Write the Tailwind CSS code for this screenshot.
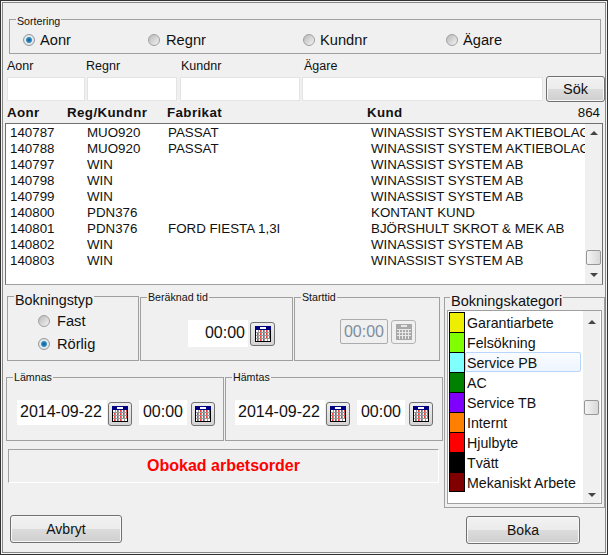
<!DOCTYPE html>
<html lang="sv">
<head>
<meta charset="utf-8">
<title>Bokning</title>
<script src="https://cdn.jsdelivr.net/npm/@tailwindcss/browser@4"></script>
</head>
<body class="m-0 bg-[#f0f0f0]">
<svg width="0" height="0" class="absolute">
  <symbol id="cal" viewBox="0 0 16 16">
    <rect x="0.5" y="0.5" width="15" height="15" fill="#fff" stroke="#000"/>
    <rect x="0" y="0" width="16" height="4" fill="#000080"/>
    <rect x="5" y="1" width="6" height="2" fill="#fff"/>
    <path d="M1 6.5h14M1 9.5h14M1 12.5h14M3.5 4v11M6.5 4v11M9.5 4v11M12.5 4v11" stroke="#999" stroke-width="1"/>
    <path d="M5 5h1M8 5h1M11 5h1M14 5h1M2 8h1M5 8h1M8 8h1M11 8h1M14 8h1M2 11h1M5 11h1M8 11h1M11 11h1M14 11h1M2 14h1M5 14h1M8 14h1" stroke="#e00000" stroke-width="1.4"/>
  </symbol>
  <symbol id="cald" viewBox="0 0 16 16">
    <rect x="0" y="0" width="16" height="16" fill="#a8a8a8"/>
    <rect x="5" y="1" width="6" height="2" fill="#e8e8e8"/>
    <path d="M1 5.5h14M1 8.5h14M1 11.5h14M3.5 5v10M6.5 5v10M9.5 5v10M12.5 5v10" stroke="#e8e8e8" stroke-width="1"/>
  </symbol>
</svg>
<div class="relative w-[608px] h-[555px] overflow-hidden bg-[#f0f0f0] text-[#111] font-['Liberation_Sans',Arial,sans-serif] shadow-[inset_0_0_0_1px_#333,inset_0_0_0_2px_#f4f4f4,inset_0_0_0_3px_#888]">

  <fieldset class="ml-[9px] pt-0 mt-[12px] w-[592px] h-[42px] border border-[#a0a0a0]">
    <legend class="ml-[6px] px-px pt-[4px] text-[10.67px] leading-[10px]">Sortering</legend>
    <div class="flex mt-[6px] pl-[13px] text-[14.67px] leading-[16px]">
      <label class="flex items-center w-[125px]"><span class="w-[12px] h-[12px] rounded-full border border-[#8f9aa3] bg-[radial-gradient(circle,#0b5f96_0,#2f8cc2_35%,#e8e8e8_50%,#dcdcdc_100%)] mr-[5px]"></span>Aonr</label>
      <label class="flex items-center w-[155px]"><span class="w-[12px] h-[12px] rounded-full border border-[#a0a0a0] bg-[linear-gradient(135deg,#b8b8b8,#f4f4f4)] mr-[6px]"></span>Regnr</label>
      <label class="flex items-center w-[143px]"><span class="w-[12px] h-[12px] rounded-full border border-[#a0a0a0] bg-[linear-gradient(135deg,#b8b8b8,#f4f4f4)] mr-[5px]"></span>Kundnr</label>
      <label class="flex items-center"><span class="w-[12px] h-[12px] rounded-full border border-[#a0a0a0] bg-[linear-gradient(135deg,#b8b8b8,#f4f4f4)] mr-[5px]"></span>Ägare</label>
    </div>
  </fieldset>

  <div class="flex pl-[7px] mt-[5px] text-[12.5px] leading-[14px]">
    <span class="w-[79px]">Aonr</span><span class="w-[95px]">Regnr</span><span class="w-[123px]">Kundnr</span><span>Ägare</span>
  </div>

  <div class="flex items-start pl-[7px] mt-[3px] h-[26px]">
    <div class="w-[78px] h-[24px] mt-px bg-white border border-[#e4e4e4]"></div>
    <div class="w-[90px] h-[24px] mt-px ml-[2px] bg-white border border-[#e4e4e4]"></div>
    <div class="w-[120px] h-[24px] mt-px ml-[3px] bg-white border border-[#e4e4e4]"></div>
    <div class="w-[241px] h-[24px] mt-px ml-[2px] bg-white border border-[#e4e4e4]"></div>
    <button class="w-[59px] h-[26px] ml-[3px] rounded-[3px] border border-[#707070] bg-[linear-gradient(#f2f2f2_0,#ebebeb_50%,#dcdcdc_50%,#cfcfcf_100%)] text-[14.5px] leading-[22px] shadow-[inset_0_0_0_1px_#f8f8f8]">Sök</button>
  </div>

  <div class="flex pl-[7px] pr-[8px] mt-[3px] h-[18px] text-[13.33px] leading-[16px]">
    <b class="w-[60px] tracking-[0.4px]">Aonr</b><b class="w-[100px] tracking-[0.4px]">Reg/Kundnr</b><b class="w-[200px] tracking-[0.4px]">Fabrikat</b><b class="flex-1 tracking-[0.4px]">Kund</b><span>864</span>
  </div>

  <div class="flex ml-[5px] w-[598px] h-[162px] border border-[#707070] border-b-[#a0a0a0] bg-white text-[13.33px] leading-[16px]">
    <div class="w-[579px] overflow-hidden whitespace-nowrap pl-[4px] pt-px">
      <div class="grid grid-cols-[77px_81px_203px_max-content]"><span>140787</span><span>MUO920</span><span>PASSAT</span><span>WINASSIST SYSTEM AKTIEBOLAGET</span></div>
      <div class="grid grid-cols-[77px_81px_203px_max-content]"><span>140788</span><span>MUO920</span><span>PASSAT</span><span>WINASSIST SYSTEM AKTIEBOLAGET</span></div>
      <div class="grid grid-cols-[77px_81px_203px_max-content]"><span>140797</span><span>WIN</span><span></span><span>WINASSIST SYSTEM AB</span></div>
      <div class="grid grid-cols-[77px_81px_203px_max-content]"><span>140798</span><span>WIN</span><span></span><span>WINASSIST SYSTEM AB</span></div>
      <div class="grid grid-cols-[77px_81px_203px_max-content]"><span>140799</span><span>WIN</span><span></span><span>WINASSIST SYSTEM AB</span></div>
      <div class="grid grid-cols-[77px_81px_203px_max-content]"><span>140800</span><span>PDN376</span><span></span><span>KONTANT KUND</span></div>
      <div class="grid grid-cols-[77px_81px_203px_max-content]"><span>140801</span><span>PDN376</span><span>FORD FIESTA 1,3I</span><span>BJÖRSHULT SKROT &amp; MEK AB</span></div>
      <div class="grid grid-cols-[77px_81px_203px_max-content]"><span>140802</span><span>WIN</span><span></span><span>WINASSIST SYSTEM AB</span></div>
      <div class="grid grid-cols-[77px_81px_203px_max-content]"><span>140803</span><span>WIN</span><span></span><span>WINASSIST SYSTEM AB</span></div>
    </div>
    <div class="flex flex-col items-center w-[17px] bg-[#f0f0f0]">
      <span class="mt-[7px] w-0 h-0 border-x-[4px] border-x-transparent border-b-[4px] border-b-[#444]"></span>
      <span class="mt-[115px] w-[15px] h-[15px] rounded-[2px] border border-[#979797] bg-[linear-gradient(90deg,#f4f4f4,#d8d8d8)]"></span>
      <span class="mt-[8px] w-0 h-0 border-x-[4px] border-x-transparent border-t-[4px] border-t-[#444]"></span>
    </div>
  </div>

  <div class="absolute left-0 top-[285px] w-full flex">
    <div class="w-[444px] shrink-0">
      <div class="flex pl-[7px] items-start">
        <fieldset class="w-[132px] h-[76px] border border-[#a0a0a0]">
          <legend class="ml-[6px] px-px pt-[8px] text-[14.3px] leading-[14px]">Bokningstyp</legend>
          <div class="mt-[6px] pl-[30px] flex flex-col gap-[7px] text-[14.67px] leading-[16px]">
            <label class="flex items-center"><span class="w-[12px] h-[12px] rounded-full border border-[#a0a0a0] bg-[linear-gradient(135deg,#b8b8b8,#f4f4f4)] mr-[7px]"></span>Fast</label>
            <label class="flex items-center"><span class="w-[12px] h-[12px] rounded-full border border-[#8f9aa3] bg-[radial-gradient(circle,#0b5f96_0,#2f8cc2_35%,#e8e8e8_50%,#dcdcdc_100%)] mr-[7px]"></span>Rörlig</label>
          </div>
        </fieldset>
        <fieldset class="mt-[5px] ml-[1px] w-[153px] h-[71px] border border-[#a0a0a0]">
          <legend class="ml-[6px] px-px text-[10.67px] leading-[14px]">Beräknad tid</legend>
          <div class="flex items-start mt-[16px] ml-[47px]">
            <div class="w-[60px] h-[27px] bg-white text-right pr-[3px] text-[16px] leading-[25px]">00:00</div>
            <button class="flex items-center justify-center ml-[2px] mt-[2px] w-[25px] h-[24px] rounded-[3px] border border-[#707070] bg-[linear-gradient(#eeeeee,#d4d4d4)]"><svg class="w-[16px] h-[16px]"><use href="#cal"/></svg></button>
          </div>
        </fieldset>
        <fieldset class="mt-[5px] ml-[1px] w-[146px] h-[71px] border border-[#a0a0a0]">
          <legend class="ml-[6px] px-px text-[10.67px] leading-[14px]">Starttid</legend>
          <div class="flex items-start mt-[15px] ml-[45px]">
            <div class="w-[48px] h-[25px] bg-[#f0f0f0] border border-[#acacac] rounded-[2px] text-center text-[#7f8c9c] text-[16px] leading-[23px]">00:00</div>
            <button class="flex items-center justify-center ml-[3px] mt-px w-[25px] h-[24px] rounded-[3px] border border-[#b4b4b4] bg-[#f0f0f0]"><svg class="w-[16px] h-[16px]"><use href="#cald"/></svg></button>
          </div>
        </fieldset>
      </div>

      <div class="flex pl-[6px] mt-[9px] items-start">
        <fieldset class="w-[218px] h-[71px] border border-[#a0a0a0]">
          <legend class="ml-[6px] px-px text-[10.67px] leading-[14px]">Lämnas</legend>
          <div class="flex items-start mt-[16px] ml-[10px]">
            <div class="w-[90px] h-[25px] bg-white text-[16px] leading-[24px] pl-[3px]">2014-09-22</div>
            <button class="flex items-center justify-center ml-px mt-[2px] w-[24px] h-[24px] rounded-[3px] border border-[#707070] bg-[linear-gradient(#eeeeee,#d4d4d4)]"><svg class="w-[16px] h-[16px]"><use href="#cal"/></svg></button>
            <div class="w-[48px] h-[25px] ml-[7px] bg-white text-center text-[16px] leading-[24px]">00:00</div>
            <button class="flex items-center justify-center ml-[4px] mt-[2px] w-[24px] h-[24px] rounded-[3px] border border-[#707070] bg-[linear-gradient(#eeeeee,#d4d4d4)]"><svg class="w-[16px] h-[16px]"><use href="#cal"/></svg></button>
          </div>
        </fieldset>
        <fieldset class="ml-px w-[218px] h-[71px] border border-[#a0a0a0]">
          <legend class="ml-[6px] px-px text-[10.67px] leading-[14px]">Hämtas</legend>
          <div class="flex items-start mt-[16px] ml-[9px]">
            <div class="w-[90px] h-[25px] bg-white text-[16px] leading-[24px] pl-[3px]">2014-09-22</div>
            <button class="flex items-center justify-center ml-px mt-[2px] w-[24px] h-[24px] rounded-[3px] border border-[#707070] bg-[linear-gradient(#eeeeee,#d4d4d4)]"><svg class="w-[16px] h-[16px]"><use href="#cal"/></svg></button>
            <div class="w-[48px] h-[25px] ml-[7px] bg-white text-center text-[16px] leading-[24px]">00:00</div>
            <button class="flex items-center justify-center ml-[4px] mt-[2px] w-[24px] h-[24px] rounded-[3px] border border-[#707070] bg-[linear-gradient(#eeeeee,#d4d4d4)]"><svg class="w-[16px] h-[16px]"><use href="#cal"/></svg></button>
          </div>
        </fieldset>
      </div>

      <div class="ml-[8px] mt-[8px] w-[431px] h-[34px] flex items-center justify-center border border-[#a0a0a0] border-r-white border-b-white text-[16px] font-bold text-[#ff0000]">Obokad arbetsorder</div>

      <button class="block ml-[10px] mt-[32px] w-[112px] h-[28px] rounded-[3px] border border-[#707070] bg-[linear-gradient(#f2f2f2_0,#ebebeb_50%,#dcdcdc_50%,#cfcfcf_100%)] text-[14px] shadow-[inset_0_0_0_1px_#f8f8f8]">Avbryt</button>
    </div>

    <div>
      <fieldset class="mt-px w-[161px] h-[222px] border border-[#a0a0a0]">
        <legend class="ml-[5px] px-px pt-[8px] text-[14.5px] leading-[14px]">Bokningskategori</legend>
        <div class="flex ml-[2px] mt-[2px] w-[155px] h-[194px] border border-[#a0a0a0] bg-white text-[14.2px]">
          <div class="w-[133px] pl-px pt-px">
            <div class="flex h-[20px]"><span class="w-[16px] border-x border-t border-black bg-[#eeee00]"></span><span class="ml-[2px] leading-[22px]">Garantiarbete</span></div>
            <div class="flex h-[20px]"><span class="w-[16px] border-x border-t border-black bg-[#80ff00]"></span><span class="ml-[2px] leading-[22px]">Felsökning</span></div>
            <div class="flex h-[20px]"><span class="w-[16px] border-x border-t border-black bg-[#80ffff]"></span><span class="flex-1 pl-[1px] leading-[20px] rounded-[2px] border border-[#b8d6fb] bg-[linear-gradient(#fafcff,#eef5fe)]">Service PB</span></div>
            <div class="flex h-[20px]"><span class="w-[16px] border-x border-t border-black bg-[#008000]"></span><span class="ml-[2px] leading-[22px]">AC</span></div>
            <div class="flex h-[20px]"><span class="w-[16px] border-x border-t border-black bg-[#8000ff]"></span><span class="ml-[2px] leading-[22px]">Service TB</span></div>
            <div class="flex h-[20px]"><span class="w-[16px] border-x border-t border-black bg-[#ff8000]"></span><span class="ml-[2px] leading-[22px]">Internt</span></div>
            <div class="flex h-[20px]"><span class="w-[16px] border-x border-t border-black bg-[#ff0000]"></span><span class="ml-[2px] leading-[22px]">Hjulbyte</span></div>
            <div class="flex h-[20px]"><span class="w-[16px] border-x border-t border-black bg-black"></span><span class="ml-[2px] leading-[22px]">Tvätt</span></div>
            <div class="flex h-[20px]"><span class="w-[16px] border-x border-y border-black bg-[#800000]"></span><span class="ml-[2px] leading-[22px]">Mekaniskt Arbete</span></div>
          </div>
          <div class="flex flex-col items-center w-[17px] ml-auto mr-px bg-[#f0f0f0]">
            <span class="mt-[9px] w-0 h-0 border-x-[4px] border-x-transparent border-b-[4px] border-b-[#444]"></span>
            <span class="mt-[76px] w-[15px] h-[15px] rounded-[2px] border border-[#979797] bg-[linear-gradient(90deg,#f4f4f4,#d8d8d8)]"></span>
            <span class="mt-[78px] w-0 h-0 border-x-[4px] border-x-transparent border-t-[4px] border-t-[#444]"></span>
          </div>
        </div>
      </fieldset>
      <button class="block ml-[22px] mt-[8px] w-[114px] h-[28px] rounded-[3px] border border-[#707070] bg-[linear-gradient(#f2f2f2_0,#ebebeb_50%,#dcdcdc_50%,#cfcfcf_100%)] text-[14px] shadow-[inset_0_0_0_1px_#f8f8f8]">Boka</button>
    </div>
  </div>
</div>
</body>
</html>
